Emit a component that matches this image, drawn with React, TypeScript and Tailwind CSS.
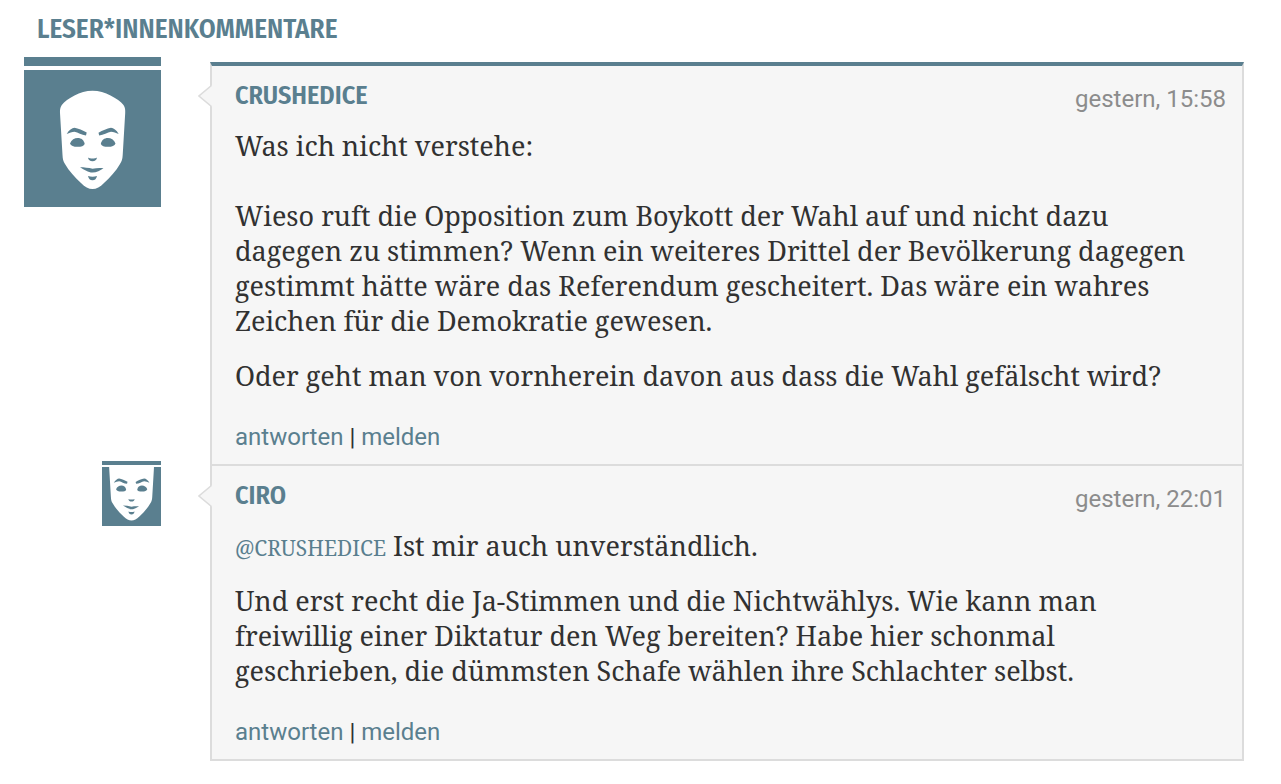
import type { ReactNode } from 'react';

type Comment = {
  author: string;
  time: string;
  reply: boolean;
  body: ReactNode[];
};

const comments: Comment[] = [
  {
    author: 'CRUSHEDICE',
    time: 'gestern, 15:58',
    reply: false,
    body: [
      <>
        Was ich nicht verstehe:
        <br />
        <br />
        Wieso ruft die Opposition zum Boykott der Wahl auf und nicht dazu
        dagegen zu stimmen? Wenn ein weiteres Drittel der Bevölkerung dagegen
        gestimmt hätte wäre das Referendum gescheitert. Das wäre ein wahres
        Zeichen für die Demokratie gewesen.
      </>,
      'Oder geht man von vornherein davon aus dass die Wahl gefälscht wird?',
    ],
  },
  {
    author: 'CIRO',
    time: 'gestern, 22:01',
    reply: true,
    body: [
      <>
        <a href="#crushedice" className="text-[21px] leading-none text-[#5a7f8f]">@CRUSHEDICE</a> Ist mir auch unverständlich.
      </>,
      'Und erst recht die Ja-Stimmen und die Nichtwählys. Wie kann man freiwillig einer Diktatur den Weg bereiten? Habe hier schonmal geschrieben, die dümmsten Schafe wählen ihre Schlachter selbst.',
    ],
  },
];

function Face({ viewBox, className }: { viewBox: string; className: string }) {
  return (
    <svg viewBox={viewBox} className={className} aria-hidden="true">
      <path
        fill="#fff"
        d="M68.5 20.7C75 20.7 81 22.5 86.500 25.500C92 28.500 97 31.500 99.500 35C101.300 37.700 101.300 40 101.200 43L98.700 85C98.500 89 97.800 91 96 94C92 101 86 107.500 80 113C76 117 72.500 119 68.500 119C64.500 119 61 117 57 113C51 107.500 45 101 41 94C39.200 91 38.700 89 38.500 85L36 43C35.900 40 36 37.700 37.800 35C40.300 31.500 45 28.500 50.500 25.500C56 22.500 62 20.700 68.500 20.700Z"
      />
      <g fill="#5a7f8f">
        <path d="M42.700 64C45 60 48 58 50.500 57.800C54 58.500 59 60.500 62.700 62.400L62 65.500C57.500 65 54 62.500 50.500 61.700C48 61.800 45.500 62.800 42.700 64Z" />
        <path d="M94.700 64C92.500 60 89.500 58 87 57.800C83 58.500 78.500 60.500 74.500 62.800L75.200 65.500C79.500 65 83.500 62.500 87 61.700C89.500 61.800 92 62.800 94.700 64Z" />
        <path d="M46 73.500C47.500 69.800 50.500 68 53.800 68C57.200 68 60 70 60.700 74C59.800 76 57.500 76.800 53.500 76.800C49.500 76.800 46.800 76 46 73.500Z" />
        <path d="M91.500 73.500C90 69.800 87 68 83.800 68C80.400 68 77.500 70 76.800 74C77.700 76 80 76.800 84 76.800C88 76.800 90.700 76 91.500 73.500Z" />
        <path d="M64 87.500C66 88.800 71 88.800 73 87.500C72.600 90 71 91.300 68.500 91.300C66 91.300 64.400 90 64 87.500Z" />
        <path d="M56 97.300C60 97.300 64.500 97.800 68.500 98.800C72.500 97.900 76 98 79.500 98.200C76.500 100.300 72.500 102.600 68.500 102.600C64 102.600 60.500 99.800 56 97.300Z" />
        <path d="M64 106C67 107 70 107 73 106C72.400 108.700 71 110.300 68.500 110.300C66 110.300 64.600 108.700 64 106Z" />
      </g>
    </svg>
  );
}

function Avatar({ small }: { small: boolean }) {
  return small ? (
    <div className="-mt-[5px] w-[59px]">
      <div className="mb-0.5 h-1 bg-[#5a7f8f]" />
      <Face viewBox="25.5 41 86 86" className="block aspect-square w-full bg-[#5a7f8f]" />
    </div>
  ) : (
    <div className="-mt-[5px] w-full">
      <div className="mb-1 h-[9px] bg-[#5a7f8f]" />
      <Face viewBox="0 0 137 137" className="block aspect-square w-full bg-[#5a7f8f]" />
    </div>
  );
}

function CommentItem({ comment }: { comment: Comment }) {
  return (
    <li className="flex gap-[49px]">
      <div className="flex w-[137px] shrink-0 items-start justify-end">
        <Avatar small={comment.reply} />
      </div>
      <article
        className={
          comment.reply
            ? 'relative min-w-0 flex-1 border-x-2 border-b-2 border-[#dcdcdc] bg-[#f6f6f6] pt-3.5 pr-4 pb-[11px] pl-[23px]'
            : 'relative min-w-0 flex-1 border-x-2 border-t-4 border-b-2 border-[#dcdcdc] border-t-[#5a7f8f] bg-[#f6f6f6] pt-3.5 pr-4 pb-[11px] pl-[23px]'
        }
      >
        <svg viewBox="0 0 15 22" className="absolute top-[19px] -left-3.5 h-[22px] w-[15px]" aria-hidden="true">
          <path d="M15 0.500L13.500 0.500L1 11L13.500 21.500L15 21.500Z" fill="#f6f6f6" />
          <path d="M13.500 0.500L1 11L13.500 21.500" fill="none" stroke="#dcdcdc" strokeWidth="1.500" />
        </svg>
        <header className="flex h-8 justify-between">
          <h3 className="font-['Fira_Sans_Condensed','Roboto_Condensed',sans-serif] text-[26px] leading-8 font-semibold text-[#5a7f8f]">
            {comment.author}
          </h3>
          <time className="pt-[3px] text-2xl leading-8 text-[#8c8c8c]">{comment.time}</time>
        </header>
        <div className="mt-4 space-y-5 pr-6 font-['Noto_Serif','Liberation_Serif',serif] text-[27px] leading-[35px] text-[#313131]">
          {comment.body.map((paragraph, i) => (
            <p key={i}>{paragraph}</p>
          ))}
        </div>
        <footer className="mt-7 text-2xl leading-8 text-[#313131]">
          <a href="#antworten" className="text-[#5a7f8f]">antworten</a>
          {' | '}
          <a href="#melden" className="text-[#5a7f8f]">melden</a>
        </footer>
      </article>
    </li>
  );
}

export default function App() {
  return (
    <main className="min-h-screen bg-white pt-[13px] pr-[37px] pb-6 pl-6 font-['Roboto',sans-serif]">
      <h2 className="mb-[17px] pl-[13px] font-['Fira_Sans_Condensed','Roboto_Condensed',sans-serif] text-[27px] leading-8 font-semibold text-[#5a7f8f]">
        LESER*INNENKOMMENTARE
      </h2>
      <ul>
        {comments.map((comment) => (
          <CommentItem key={comment.author} comment={comment} />
        ))}
      </ul>
    </main>
  );
}
